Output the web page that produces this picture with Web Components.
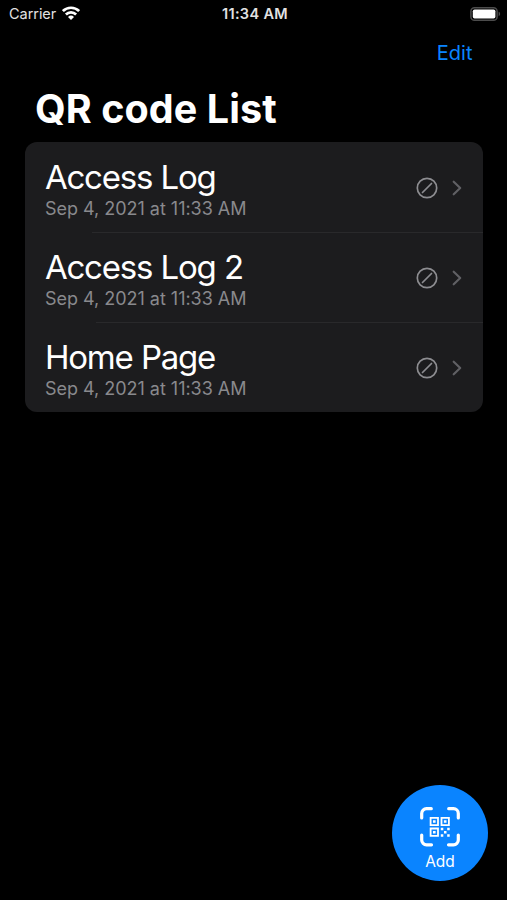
<!DOCTYPE html>
<html lang="en">
<head>
<meta charset="utf-8">
<title>QR code List</title>
<style>
html,body{margin:0;background:#000;height:100%;overflow:hidden}
body{font-family:Inter,"Liberation Sans",sans-serif;color:#fff}
</style>
</head>
<body>
<qr-app></qr-app>
<script>
const define = (name, html) => customElements.define(name, class extends HTMLElement {
  constructor() {
    super();
    this.attachShadow({ mode: 'open' }).innerHTML = html;
  }
});

define('status-bar', `
<style>
:host{display:grid;grid-template-columns:1fr auto 1fr;align-items:center;height:28px;padding:0 6px 0 9px;box-sizing:border-box;font-size:14.5px;line-height:28px;color:#e2e2e2}
.left{display:flex;align-items:center;gap:6px;letter-spacing:-.05px}
.time{font-weight:600;letter-spacing:.35px;font-size:14.5px}
.right{display:flex;justify-content:flex-end}
svg{display:block}
.wifi{margin-top:-2px}
.battery{margin-top:-1px}
</style>
<div class="left"><span>Carrier</span>
<svg class="wifi" width="18" height="14" viewBox="0 0 18 14" fill="none" stroke="#fff" stroke-width="2.7"><path d="M.9 5.1a11.5 11.5 0 0 1 16.2 0M3.9 8.5a7.2 7.2 0 0 1 10.2 0"/><path d="M9 13.9 6 10.9a4.3 4.3 0 0 1 6 0Z" fill="#fff" stroke="none"/></svg></div>
<div class="time">11:34 AM</div>
<div class="right"><svg class="battery" width="31" height="14" viewBox="0 0 31 14"><rect x=".9" y=".75" width="26.2" height="12.5" rx="3.6" fill="none" stroke="#4c4c4c" stroke-width="1.5"/><rect x="2.8" y="2.4" width="22.6" height="9.2" rx="1.8" fill="#fff"/><path d="M28.6 4.8c2 .6 2 3.8 0 4.4Z" fill="#4c4c4c"/></svg></div>`);

define('nav-bar', `
<style>
:host{display:flex;justify-content:flex-end;align-items:center;height:49px;padding-right:34.5px;box-sizing:border-box;font-size:20px;color:#0a84ff}
</style><slot></slot>`);

define('large-title', `
<style>
:host{display:block;height:65px;padding:8px 0 0 35px;box-sizing:border-box;font-size:39.5px;font-weight:700;line-height:48px;letter-spacing:.07px;white-space:nowrap}
</style><slot></slot>`);

define('inset-list', `
<style>
:host{display:flex;flex-direction:column;margin:0 24.5px 0 25px;border-radius:12px;background:#1c1c1e;overflow:hidden}
</style><slot></slot>`);

define('code-row', `
<style>
:host{display:flex;align-items:center;height:90px;padding:1px 21px 0 20px;box-sizing:border-box;
background:linear-gradient(#29292b,#29292b) no-repeat var(--inset,67px) 0/100% var(--line,1px)}
.text{flex:1;white-space:nowrap;padding-top:1px}
.name{font-size:33px;line-height:40px;letter-spacing:-1.25px;word-spacing:.5px}
.date{font-size:18px;line-height:23px;color:#89898d;letter-spacing:-.02px}
svg{display:block}
.ban{margin-right:14px}
</style>
<div class="text"><div class="name"><slot></slot></div><div class="date"><slot name="date"></slot></div></div>
<svg class="ban" width="22" height="22" viewBox="0 0 22 22" fill="none" stroke="#8c8c90" stroke-width="1.7" stroke-linecap="round"><circle cx="11" cy="11" r="9.7"/><path d="M6.5 15.5 15.5 6.5"/></svg>
<svg width="10" height="16" viewBox="0 0 10 16" fill="none" stroke="#606064" stroke-width="2.2" stroke-linecap="round" stroke-linejoin="round"><path d="M1.7 1.7 8.2 8l-6.5 6.3"/></svg>`);

define('add-button', `
<style>
:host{position:absolute;left:392px;top:785px;width:96px;height:96px;border-radius:50%;background:#0a84ff;display:flex;flex-direction:column;align-items:center;box-sizing:border-box;padding-top:22px;font-size:15.5px;line-height:20px}
svg{display:block;margin-bottom:5px}
</style>
<svg width="40" height="40" viewBox="0 0 40 40" fill="none" stroke="#fff" stroke-linejoin="miter">
<path stroke-width="3.2" stroke-linecap="round" d="M1.7 11V6.5a4.8 4.8 0 0 1 4.8-4.8H11.3M28.7 1.7h4.8a4.8 4.8 0 0 1 4.8 4.8V11M38.3 28v5a4.8 4.8 0 0 1-4.8 4.8h-5M11.5 37.8h-5A4.8 4.8 0 0 1 1.7 33v-5"/>
<path stroke-width="1.8" d="M10.6 10.8h7.4v7.4h-7.4zM21.5 10.8h7.4v7.4h-7.4zM10.6 21.5h7.4v7.4h-7.4z"/>
<path fill="#fff" stroke="none" d="M13 13.2h2.6v2.6H13zM23.9 13.2h2.6v2.6h-2.6zM13 23.9h2.6v2.6H13zM20.8 20.8h2.5v2.5h-2.5zM27.2 20.8h2.5v2.5h-2.5zM24 24h2.5v2.5H24zM20.8 27.2h2.5v2.5h-2.5zM27.2 27.2h2.5v2.5h-2.5z"/>
</svg>
<slot></slot>`);

define('qr-app', `
<style>
:host{display:block;position:relative;width:507px;height:900px;background:#000;overflow:hidden}
code-row:first-child{--line:0px}
code-row:last-child{--inset:71px}
</style>
<status-bar></status-bar>
<nav-bar>Edit</nav-bar>
<large-title>QR code List</large-title>
<inset-list>
<code-row>Access Log<span slot="date">Sep 4, 2021 at 11:33 AM</span></code-row>
<code-row>Access Log 2<span slot="date">Sep 4, 2021 at 11:33 AM</span></code-row>
<code-row>Home Page<span slot="date">Sep 4, 2021 at 11:33 AM</span></code-row>
</inset-list>
<add-button>Add</add-button>`);
</script>
</body>
</html>
